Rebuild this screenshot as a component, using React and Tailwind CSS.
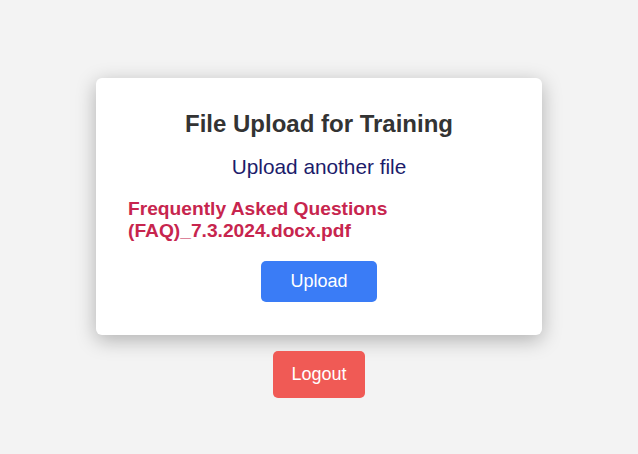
import React from 'react';

const App = () => {
  const fileName = 'Frequently Asked Questions (FAQ)_7.3.2024.docx.pdf';

  return (
    <div className="min-h-screen bg-[#f3f3f3] pt-[78px] font-['Liberation_Sans',Arial,sans-serif]">
      <div className="flex flex-col items-center">
        {/* Upload card */}
        <div className="w-[446px] bg-white rounded-md shadow-[0_5px_20px_rgba(0,0,0,0.28)] px-8 pt-8 pb-[33px]">
          <h2 className="text-center text-[24px] leading-[1.15] font-bold text-[#333333]">
            File Upload for Training
          </h2>
          <p className="mt-[17px] text-center text-[20.8px] leading-[1.15] text-[#1c1c6b]">
            Upload another file
          </p>
          <p className="mt-[19px] text-[19.2px] leading-[22px] font-bold text-[#c7254e]">
            {fileName}
          </p>
          <div className="mt-[19px] flex justify-center">
            <button className="bg-[#3a7cf6] text-white text-[18px] leading-[21px] px-[29px] py-[10px] rounded-[5px]">
              Upload
            </button>
          </div>
        </div>

        <button className="mt-4 bg-[#f05a55] text-white text-[18px] leading-[21px] px-[18px] py-[13px] rounded-[5px]">
          Logout
        </button>
      </div>
    </div>
  );
};

export default App;
